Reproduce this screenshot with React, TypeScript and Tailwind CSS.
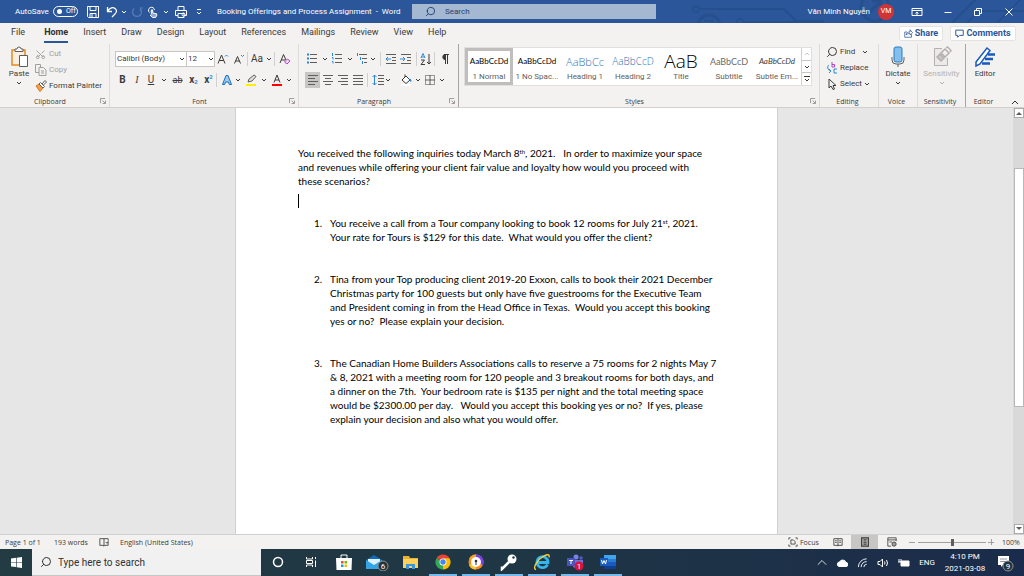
import { clsx } from "clsx";
import { Scissors, Search } from "lucide-react";
import type { ReactNode } from "react";

type Props = { className?: string; children?: ReactNode };

function Chevron({ className }: { className?: string }) {
  return (
    <svg viewBox="0 0 6 6" className={clsx("h-[6px] w-[6px] shrink-0", className)} fill="none" stroke="currentColor">
      <path d="M1 2l2 2 2-2" />
    </svg>
  );
}

function Tool({ label, className, children }: Props & { label: string }) {
  return (
    <button type="button" aria-label={label} className={clsx("flex h-[16px] shrink-0 items-center justify-center", className)}>
      {children}
    </button>
  );
}

function Drop({ label, className }: { label: string; className?: string }) {
  return (
    <Tool label={label} className={className}>
      <Chevron />
    </Tool>
  );
}

function Sep() {
  return <span className="h-[14px] w-px shrink-0 bg-[#d2d0ce]" />;
}

function Glyph({ children, className, box = "0 0 12 12" }: Props & { box?: string }) {
  return (
    <svg viewBox={box} className={clsx("shrink-0", className ?? "h-[12px] w-[12px]")} fill="none" stroke="currentColor">
      {children}
    </svg>
  );
}

function Group({
  name,
  className,
  launcher,
  dark,
  children,
}: Props & { name: string; launcher?: boolean; dark?: boolean }) {
  return (
    <section
      aria-label={name}
      className={clsx("flex flex-col border-r", dark ? "border-[#a8a6a4]" : "border-[#dddbd9]", className)}
    >
      <div className="flex-1">{children}</div>
      <div className="flex h-[12px] items-center pr-[3px] font-['Open_Sans'] text-[7px]">
        <span className="flex-1 text-center">{name}</span>
        {launcher && (
          <button type="button" aria-label={`${name} settings`}>
            <svg viewBox="0 0 7 7" className="h-[6px] w-[6px]" fill="none" stroke="#8a8886">
              <path d="M.5 6V.5H6M3 3l3 3M6.5 3v3.5H3" />
            </svg>
          </button>
        )}
      </div>
    </section>
  );
}

/* Title bar */

function Circuits() {
  return (
    <svg className="absolute right-0 top-0 h-[23px] w-[340px]" viewBox="0 0 340 23" fill="none" stroke="#264f8e" strokeWidth="2">
      <circle cx="12" cy="9" r="3" />
      <path d="M15 9h85l12 12h28" />
      <circle cx="25" cy="26" r="11" strokeWidth="3" />
      <path d="M20 21h10" />
      <circle cx="56" cy="22" r="3" />
      <path d="M59 22h80" />
      <circle cx="191" cy="7" r="14" strokeWidth="3" />
      <path d="M184 14l13-13M188 1h9v9" strokeWidth="3" />
      <path d="M268 23l24-24M283 23l12-12h45M313 23l24-24" />
    </svg>
  );
}

function TitleBar() {
  return (
    <header className="relative flex h-[23px] shrink-0 items-center bg-[#2b579a] text-[8px] text-white">
      <Circuits />
      <label className="flex w-[87px] items-center gap-[5px] pl-[15px]">
        <span className="w-[33px] whitespace-nowrap">AutoSave</span>
        <input type="checkbox" role="switch" className="peer sr-only" />
        <span className="flex h-[11px] w-[25px] items-center gap-[4px] rounded-full border border-white pl-[3px] text-[7px]">
          <span className="h-[5px] w-[5px] rounded-full bg-white" />
          Off
        </span>
      </label>
      <Tool label="Save" className="w-[12px]">
        <Glyph>
          <path d="M.5.5h11v11h-10l-1-1zM3 .5v4h6v-4M3 11.5v-4h6v4M5 8v3" />
        </Glyph>
      </Tool>
      <Tool label="Undo" className="ml-[6px] w-[13px]">
        <Glyph>
          <path d="M1.500 1v4.500H6M1.500 5C4 2 7 1 9 2.500c2.500 2 1.500 4-.5 6L6 11" strokeWidth="1.300" />
        </Glyph>
      </Tool>
      <Drop label="Undo list" className="w-[12px]" />
      <Tool label="Repeat" className="ml-[1px] w-[12px] text-[#5a7db3]">
        <Glyph>
          <path d="M3 2.500a4.500 4.500 0 1 0 6 0M9.500 5V2H12" strokeWidth="1.200" />
        </Glyph>
      </Tool>
      <Tool label="Touch mode" className="ml-[4px] w-[12px]">
        <Glyph>
          <path d="M2.500 6.500a3 3 0 1 1 5-2.500" />
          <path d="M4.300 8.500V4q.7-1 1.400 0v3l4 .8v2L8.500 11.500h-3L3 9" fill="#fff" fillOpacity=".5" />
        </Glyph>
      </Tool>
      <Drop label="Touch mode list" className="w-[13px]" />
      <Tool label="Quick print" className="ml-[3px] w-[12px]">
        <Glyph>
          <path d="M3 4.500v-4h6v4M3 9.500H.5v-5h11v5H9M3 7.500h6v4H3z" />
          <circle cx="8.500" cy="8.500" r="1.500" />
        </Glyph>
      </Tool>
      <Tool label="Customize toolbar" className="ml-[8px] w-[8px]">
        <svg viewBox="0 0 6 6" className="h-[6px] w-[6px]" stroke="#fff" fill="none">
          <path d="M1 .5h4M1 3l2 2 2-2" />
        </svg>
      </Tool>
      <h1 className="ml-[14px] w-[195px] whitespace-pre">Booking Offerings and Process Assignment  -  Word</h1>
      <label className="flex h-[15px] w-[244px] items-center gap-[9px] bg-[#a5b8d2] pl-[13px] text-[#1f4173]">
        <Search className="h-[11px] w-[11px] -scale-x-100" strokeWidth={2} />
        <input type="text" aria-label="Search" placeholder="Search" className="w-[120px] bg-transparent outline-none placeholder:text-[#1f4173]" />
      </label>
      <div className="relative ml-auto flex items-center">
        <span className="whitespace-nowrap">Văn Minh Nguyễn</span>
        <span className="ml-[8px] flex h-[16px] w-[16px] items-center justify-center rounded-full bg-[#d13438] text-[7px]">VM</span>
        <Tool label="Ribbon display" className="ml-[17px] w-[12px]">
          <Glyph>
            <path d="M1 2.500h10v7H1zM1 4.500h10M6 9V6M4.500 7.500L6 6l1.500 1.500" />
          </Glyph>
        </Tool>
        <Tool label="Minimize" className="ml-[19px] w-[12px]">
          <Glyph>
            <path d="M2.500 6.500h7" />
          </Glyph>
        </Tool>
        <Tool label="Restore" className="ml-[18px] w-[12px]">
          <Glyph>
            <path d="M2.500 4.500h5v5h-5zM4.500 4V2.500h5v5H8" />
          </Glyph>
        </Tool>
        <Tool label="Close" className="ml-[19px] mr-[9px] w-[12px]">
          <Glyph>
            <path d="M2.500 2.500l7 7M9.500 2.500l-7 7" />
          </Glyph>
        </Tool>
      </div>
    </header>
  );
}

/* Tabs */

const TABS = ["File", "Home", "Insert", "Draw", "Design", "Layout", "References", "Mailings", "Review", "View", "Help"];

function Tabs() {
  return (
    <nav className="flex h-[21px] shrink-0 items-center pl-[11px] pr-[8px] text-[9px]">
      <div className="flex gap-[15px]">
        {TABS.map((tab) => (
          <button
            key={tab}
            type="button"
            className={clsx(
              "h-[18px] border-b-2",
              tab === "Home" ? "border-[#2b579a] font-bold text-[#323130]" : "border-transparent",
              tab === "File" && "mr-[4px]",
            )}
          >
            {tab}
          </button>
        ))}
      </div>
      <div className="ml-auto flex gap-[7px] font-bold text-[#2b579a]">
        <button type="button" className="flex h-[15px] w-[44px] items-center justify-center gap-[2px] rounded-xs border border-[#e5e3e1] bg-white">
          <Glyph className="h-[9px] w-[9px]">
            <path d="M4 4H1v7h9V7M3 8c0-3 2-4 5-4V1l3.500 4L8 8V6C6 6 4 6 3 8z" />
          </Glyph>
          Share
        </button>
        <button type="button" className="flex h-[15px] w-[66px] items-center justify-center gap-[2px] rounded-xs border border-[#e5e3e1] bg-white">
          <Glyph className="h-[9px] w-[9px]">
            <path d="M1 1.500h10v7H6l-2.500 2.500V8.500H1z" strokeWidth="1.300" />
          </Glyph>
          Comments
        </button>
      </div>
    </nav>
  );
}

/* Ribbon */

function Clipboard() {
  return (
    <Group name="Clipboard" launcher className="w-[110px]">
      <div className="flex pt-[2px]">
        <button type="button" className="flex w-[35px] flex-col items-center pl-[3px]">
          <svg viewBox="0 0 20 22" className="h-[22px] w-[20px]" fill="none">
            <path d="M3 4h13v15H3z" fill="#f8efe2" stroke="#e58a1f" strokeWidth="1.500" />
            <path d="M6 5.500V3h2a2 2 0 0 1 4 0h2v2.500z" fill="#fff" stroke="#605e5c" />
            <path d="M10.500 9.500h8v11h-8z" fill="#fff" stroke="#605e5c" />
          </svg>
          <span className="h-[12px] leading-[12px]">Paste</span>
          <Chevron />
        </button>
        <div className="flex flex-col">
          <button type="button" disabled className="flex h-[16px] items-center gap-[3px] text-[#a19f9d]">
            <Scissors className="h-[11px] w-[11px] -rotate-90" strokeWidth={2} />
            Cut
          </button>
          <button type="button" disabled className="flex h-[16px] items-center gap-[2px] text-[#a19f9d]">
            <Glyph>
              <path d="M4 8.500H.5v-8h5V3M4 3.500h4.500L11 6v5.500H4zM6 7h3M6 9h3" />
            </Glyph>
            Copy
          </button>
          <button type="button" className="flex h-[16px] items-center gap-[2px] whitespace-nowrap">
            <Glyph>
              <path d="M1 6l3-2 4 4-3 3.500z" fill="#f0a04b" stroke="#d9771a" />
              <path d="M4 4l1.500-1.500 4 4L8 8zM7 4l3-3.500L11.500 2 8.500 5" fill="#fff" stroke="#605e5c" />
            </Glyph>
            Format Painter
          </button>
        </div>
      </div>
    </Group>
  );
}

function FontGroup() {
  return (
    <Group name="Font" launcher className="w-[189px]">
      <div className="mt-[5px] flex h-[20px] items-center pl-[5px]">
        <div className="relative">
          <select aria-label="Font" className="h-[16px] w-[72px] appearance-none border border-[#c8c6c4] bg-white pl-[1px] leading-[12px]">
            <option>Calibri (Body)</option>
          </select>
          <Chevron className="pointer-events-none absolute right-[2px] top-[5px]" />
        </div>
        <div className="relative -ml-px">
          <select aria-label="Font size" className="h-[16px] w-[29px] appearance-none border border-[#c8c6c4] bg-white pl-[1px] leading-[12px]">
            <option>12</option>
          </select>
          <Chevron className="pointer-events-none absolute right-[1px] top-[5px]" />
        </div>
        <Tool label="Grow font" className="w-[16px]">
          <Glyph>
            <path d="M1 10.500L4.500 2 8 10.500M2.300 7.500h4.400" />
            <path d="M8 3.500L9.500 2 11 3.500" stroke="#2b88d8" />
          </Glyph>
        </Tool>
        <Tool label="Shrink font" className="w-[16px]">
          <Glyph>
            <path d="M1.500 10.500l3-7 3 7M2.500 8h4" />
            <path d="M8 2l1.500 1.500L11 2" stroke="#2b88d8" />
          </Glyph>
        </Tool>
        <Sep />
        <Tool label="Change case" className="w-[16px] pl-[2px] text-[10px]">Aa</Tool>
        <Drop label="Case list" className="w-[10px]" />
        <Sep />
        <Tool label="Clear formatting" className="ml-[3px] w-[14px]">
          <Glyph>
            <path d="M1 10L4.500 1.500 7 7M2.300 7h4" />
            <path d="M5.500 9l3-3 2.500 2-3 3z" stroke="#b146c2" fill="#f0dcf3" />
          </Glyph>
        </Tool>
      </div>
      <div className="mt-px flex h-[20px] items-center pl-[5px] text-[10px]">
        <Tool label="Bold" className="w-[15px] font-bold">B</Tool>
        <Tool label="Italic" className="w-[14px] font-['Liberation_Serif'] italic">I</Tool>
        <Tool label="Underline" className="w-[14px] underline">U</Tool>
        <Drop label="Underline list" className="w-[11px]" />
        <Tool label="Strikethrough" className="w-[17px] text-[9px] line-through">ab</Tool>
        <Tool label="Subscript" className="w-[15px] font-bold">
          x<sub className="text-[6px] text-[#2b88d8]">2</sub>
        </Tool>
        <Tool label="Superscript" className="w-[15px] font-bold">
          x<sup className="text-[6px] text-[#2b88d8]">2</sup>
        </Tool>
        <Sep />
        <Tool label="Text effects" className="ml-px w-[17px]">
          <Glyph>
            <path d="M1.500 10.500L5 1.500h2l3.500 9H8.300l-.8-2.500h-3l-.8 2.500z" fill="#9ccbf0" stroke="#1b6fb8" />
          </Glyph>
        </Tool>
        <Drop label="Effects list" className="w-[6px]" />
        <Tool label="Highlight" className="w-[20px]">
          <Glyph>
            <path d="M3 8l1-3 5-4 2 1.500L7 7z" fill="#e1dfdd" stroke="#605e5c" />
            <path d="M1 11h10" stroke="#ffee00" strokeWidth="2" />
          </Glyph>
        </Tool>
        <Drop label="Highlight list" className="w-[6px]" />
        <Tool label="Font color" className="w-[19px]">
          <Glyph>
            <path d="M3 8.500l3-7.500 3 7.500M4 6h4" />
            <path d="M1 11h10" stroke="#f00" strokeWidth="2" />
          </Glyph>
        </Tool>
        <Drop label="Color list" className="w-[6px]" />
      </div>
    </Group>
  );
}

const ALIGN = [
  { name: "Align left", d: "M0 .5h10M0 3.500h7M0 6.500h10M0 9.500h7" },
  { name: "Center", d: "M0 .5h10M2 3.500h6M0 6.500h10M2 9.500h6" },
  { name: "Align right", d: "M0 .5h10M3 3.500h7M0 6.500h10M3 9.500h7" },
  { name: "Justify", d: "M0 .5h10M0 3.500h10M0 6.500h10M0 9.500h10" },
];

function Paragraph() {
  return (
    <Group name="Paragraph" launcher dark className="w-[160px]">
      <div className="mt-[5px] flex h-[20px] items-center pl-[6px]">
        <Tool label="Bullets" className="w-[14px]">
          <Glyph>
            <path d="M4 1.500h7M4 5.500h7M4 9.500h7" stroke="#605e5c" />
            <path d="M1 1.500h2M1 5.500h2M1 9.500h2" stroke="#2b88d8" strokeWidth="2" />
          </Glyph>
        </Tool>
        <Drop label="Bullets list" className="w-[11px]" />
        <Tool label="Numbering" className="w-[14px]">
          <Glyph>
            <path d="M4 1.500h7M4 5.500h7M4 9.500h7" stroke="#605e5c" />
            <path d="M1.500 0v3M1 4.500h1v2M1 8.500h1v2" stroke="#2b88d8" />
          </Glyph>
        </Tool>
        <Drop label="Numbering list" className="w-[11px]" />
        <Tool label="Multilevel list" className="w-[14px]">
          <Glyph>
            <path d="M3 1.500h8M6 5.500h5M8 9.500h3" stroke="#605e5c" />
            <path d="M1.500 0v3M4.500 4v3M6.500 8v3" stroke="#2b88d8" />
          </Glyph>
        </Tool>
        <Drop label="Multilevel options" className="w-[7px]" />
        <span className="w-[4px]" />
        <Sep />
        <Tool label="Decrease indent" className="ml-[2px] w-[15px]">
          <Glyph>
            <path d="M1 1.500h10M7 4.500h4M7 7.500h4M1 10.500h10" stroke="#605e5c" />
            <path d="M6 6H1M3 4L1 6l2 2" stroke="#2b88d8" />
          </Glyph>
        </Tool>
        <Tool label="Increase indent" className="w-[15px]">
          <Glyph>
            <path d="M1 1.500h10M7 4.500h4M7 7.500h4M1 10.500h10" stroke="#605e5c" />
            <path d="M0 6h5M3 4l2 2-2 2" stroke="#2b88d8" />
          </Glyph>
        </Tool>
        <span className="w-[3px]" />
        <Sep />
        <Tool label="Sort" className="w-[17px]">
          <Glyph>
            <path d="M1 5l2-4.500L5 5M1.500 4h3" stroke="#2b88d8" />
            <path d="M1 7h3.500L1 11.500h4M9 1v10M7 9l2 2 2-2" />
          </Glyph>
        </Tool>
        <Sep />
        <Tool label="Show marks" className="w-[20px]">
          <Glyph>
            <path d="M6.500 2v9M8.500 2v9M5 1.500h5" />
            <path d="M6 1.500a2 2.300 0 0 0 0 5z" fill="currentColor" />
          </Glyph>
        </Tool>
      </div>
      <div className="mt-px flex h-[20px] items-center pl-[6px]">
        {ALIGN.map((align, i) => (
          <Tool key={align.name} label={align.name} className={clsx("w-[15px]", i === 0 && "bg-[#c8c6c4]")}>
            <Glyph className="h-[10px] w-[10px]" box="0 0 10 10">
              <path d={align.d} stroke="#605e5c" />
            </Glyph>
          </Tool>
        ))}
        <span className="w-[2px]" />
        <Sep />
        <Tool label="Line spacing" className="ml-[2px] w-[15px]">
          <Glyph>
            <path d="M6 1.500h6M6 4.500h6M6 7.500h6M6 10.500h6" stroke="#605e5c" />
            <path d="M2.500 1v10M.5 3l2-2 2 2M.5 9l2 2 2-2" stroke="#2b88d8" />
          </Glyph>
        </Tool>
        <Drop label="Spacing list" className="w-[6px]" />
        <Tool label="Shading" className="ml-[8px] w-[14px]">
          <Glyph>
            <path d="M2 6l4-4 4 4-4 3.500zM5 3V.5" fill="#fff" />
            <path d="M10 5l1 2.500" stroke="#2b88d8" strokeWidth="1.500" />
            <path d="M1 11h10" stroke="#fff" strokeWidth="2" />
          </Glyph>
        </Tool>
        <Drop label="Shading list" className="w-[10px]" />
        <Tool label="Borders" className="w-[14px]">
          <Glyph>
            <path d="M1.500 1.500h9v9h-9z" strokeDasharray="1 1" />
            <path d="M6 1v10M1 6h10" stroke="#605e5c" />
          </Glyph>
        </Tool>
        <Drop label="Borders list" className="w-[10px]" />
      </div>
    </Group>
  );
}

const STYLES = [
  { name: "1 Normal", sample: "AaBbCcDd", look: "text-[8px] font-['Lato'] text-black" },
  { name: "1 No Spac...", sample: "AaBbCcDd", look: "text-[8px] font-['Lato'] text-black" },
  { name: "Heading 1", sample: "AaBbCc", look: "text-[11px] font-['Open_Sans'] font-light text-[#2e74b5]" },
  { name: "Heading 2", sample: "AaBbCcD", look: "text-[10px] font-['Open_Sans'] font-light text-[#2e74b5]" },
  { name: "Title", sample: "AaB", look: "text-[19px] font-['Open_Sans'] font-light text-black" },
  { name: "Subtitle", sample: "AaBbCcD", look: "text-[9px] font-['Lato'] text-[#6b6b6b]" },
  { name: "Subtle Em...", sample: "AaBbCcDd", look: "text-[8px] font-['Lato'] italic text-[#404040]" },
];

function Styles() {
  return (
    <Group name="Styles" launcher className="min-w-[360px] flex-1">
      <div className="ml-[5px] mr-[7px] mt-[3px] flex h-[39px] border border-[#e1dfdd] bg-white">
        <div className="flex flex-1">
          {STYLES.map((style, i) => (
            <button
              key={style.name}
              type="button"
              className={clsx(
                "flex w-[48px] flex-col items-center border-[3px] whitespace-nowrap",
                i === 0 ? "border-[#c0bebc]" : "border-transparent",
              )}
            >
              <span className={clsx("flex h-[20px] items-center leading-none", style.look)}>{style.sample}</span>
              <span className="h-[11px] text-[8px] leading-[11px] text-[#605e5c]">{style.name}</span>
            </button>
          ))}
        </div>
        <div className="flex w-[10px] flex-col border-l border-[#d2d0ce]">
          <button type="button" aria-label="Previous styles" className="flex flex-1 items-center justify-center text-[#c8c6c4]">
            <Chevron className="rotate-180" />
          </button>
          <button type="button" aria-label="Next styles" className="flex flex-1 items-center justify-center border-y border-[#c8c6c4]">
            <Chevron />
          </button>
          <button type="button" aria-label="All styles" className="flex flex-1 items-center justify-center">
            <svg viewBox="0 0 6 6" className="h-[6px] w-[6px]" stroke="currentColor" fill="none">
              <path d="M0 .5h6M1 3l2 2 2-2" />
            </svg>
          </button>
        </div>
      </div>
    </Group>
  );
}

function Editing() {
  return (
    <Group name="Editing" className="w-[59px]">
      <div className="flex flex-col pl-[6px]">
        <button type="button" className="flex h-[16px] items-center gap-[2px]">
          <Search className="h-[12px] w-[12px] -scale-x-100" strokeWidth={2} />
          Find
          <Chevron className="ml-[5px]" />
        </button>
        <button type="button" className="flex h-[16px] items-center gap-[2px]">
          <Glyph>
            <path d="M6 0v5h2.500V2.500H6" stroke="#b146c2" />
            <path d="M11 7H8v4h3" stroke="#2b88d8" />
            <path d="M3 3C1 4 1 8 5 9M3 7l2 2-2 2" stroke="#2b88d8" />
          </Glyph>
          Replace
        </button>
        <button type="button" className="flex h-[16px] items-center gap-[2px]">
          <Glyph>
            <path d="M3 1v9l2-2 2 3.500L8.500 11 7 7.500h3z" />
          </Glyph>
          Select
          <Chevron />
        </button>
      </div>
    </Group>
  );
}

function BigButton({ label, icon, off, chevron }: { label: string; icon: ReactNode; off?: boolean; chevron?: boolean }) {
  return (
    <button
      type="button"
      disabled={off}
      className={clsx("flex w-full flex-col items-center pt-[2px]", off && "text-[#b3b0ad]")}
    >
      {icon}
      <span className="h-[12px] leading-[12px]">{label}</span>
      {chevron && <Chevron />}
    </button>
  );
}

function Ribbon() {
  return (
    <div className="flex h-[64px] shrink-0 border-b border-[#d2d0ce] text-[8px]">
      <Clipboard />
      <FontGroup />
      <Paragraph />
      <Styles />
      <Editing />
      <Group name="Voice" className="w-[39px]">
        <BigButton
          label="Dictate"
          chevron
          icon={
            <svg viewBox="0 0 16 22" className="h-[22px] w-[16px]" fill="none" stroke="#605e5c">
              <path d="M2 11v3q0 4 4 4h4q4 0 4-4v-3M8 18v3" />
              <rect x="4" y="1" width="8" height="15" rx="2" fill="#83beec" stroke="#2b7cc0" />
            </svg>
          }
        />
      </Group>
      <Group name="Sensitivity" dark className="w-[48px]">
        <BigButton
          label="Sensitivity"
          off
          chevron
          icon={
            <svg viewBox="0 0 20 22" className="h-[22px] w-[20px]" fill="none" stroke="#b3b0ad">
              <path d="M10 2.500H2.500v17h13V12" fill="#eceae8" />
              <path d="M5 11l3-3 4 4-3 3z" fill="#c8c6c4" strokeWidth="1.500" />
              <path d="M9 7l4-4 4 4-4 4zM14 2l1.500-1L19 4.500 18 6" strokeWidth="1.500" />
            </svg>
          }
        />
      </Group>
      <Group name="Editor" className="w-[39px] border-transparent">
        <BigButton
          label="Editor"
          icon={
            <svg viewBox="0 0 22 22" className="h-[22px] w-[22px]" fill="none" stroke="#185abd">
              <path d="M2 16L13 2l3 2.500L6 18l-4 2z" fill="#fff" strokeWidth="1.500" />
              <path d="M14 8.500h7M11 13h8M8 17.500h8" strokeWidth="2.500" />
            </svg>
          }
        />
      </Group>
      <button type="button" aria-label="Collapse ribbon" className="ml-[6px] mr-[5px] self-end pb-[2px]">
        <svg viewBox="0 0 8 6" className="h-[6px] w-[8px]" fill="none" stroke="#323130">
          <path d="M1 5l3-3 3 3" />
        </svg>
      </button>
    </div>
  );
}

/* Document */

const QUESTIONS: ReactNode[] = [
  <>
    You receive a call from a Tour company looking to book 12 rooms for July 21<sup className="text-[6px]">st</sup>, 2021.
    <br />
    {"Your rate for Tours is $129 for this date.  What would you offer the client?"}
  </>,
  "Tina from your Top producing client 2019-20 Exxon, calls to book their 2021 December\nChristmas party for 100 guests but only have five guestrooms for the Executive Team\nand President coming in from the Head Office in Texas.  Would you accept this booking\nyes or no?  Please explain your decision.",
  "The Canadian Home Builders Associations calls to reserve a 75 rooms for 2 nights May 7\n& 8, 2021 with a meeting room for 120 people and 3 breakout rooms for both days, and\na dinner on the 7th.  Your bedroom rate is $135 per night and the total meeting space\nwould be $2300.00 per day.   Would you accept this booking yes or no?  If yes, please\nexplain your decision and also what you would offer.",
];

function Document() {
  return (
    <main className="flex min-h-0 flex-1 bg-[#e6e6e6]">
      <div className="flex min-w-0 flex-1 justify-center overflow-hidden">
        <article className="w-[543px] border-x border-[#d2d0ce] bg-white px-[62px] pt-[38px] font-['Lato',sans-serif] text-[10px] leading-[14px] text-black">
          <p className="whitespace-pre">
            {"You received the following inquiries today March 8"}
            <sup className="text-[6px]">th</sup>
            {", 2021.   In order to maximize your space\nand revenues while offering your client fair value and loyalty how would you proceed with\nthese scenarios?"}
          </p>
          <div className="my-[6px] h-[14px] w-px bg-black" />
          <ol className="flex flex-col gap-[28px] pl-[16px] pt-[2px]">
            {QUESTIONS.map((question, i) => (
              <li key={i} className="flex">
                <span className="w-[16px] shrink-0">{i + 1}.</span>
                <div className="whitespace-pre">{question}</div>
              </li>
            ))}
          </ol>
        </article>
      </div>
      <div className="flex w-[11px] flex-col items-center bg-[#d9d9d9]">
        <button type="button" aria-label="Scroll up" className="flex h-[10px] w-[10px] items-center justify-center border border-[#ababab] bg-white text-[#605e5c]">
          <svg viewBox="0 0 6 4" className="h-[4px] w-[6px]" fill="currentColor">
            <path d="M0 4l3-3 3 3z" />
          </svg>
        </button>
        <div className="mt-[50px] h-[239px] w-[10px] border border-[#b8b8b8] bg-white" />
        <button type="button" aria-label="Scroll down" className="mt-auto flex h-[10px] w-[10px] items-center justify-center border border-[#ababab] bg-white text-[#605e5c]">
          <svg viewBox="0 0 6 4" className="h-[4px] w-[6px]" fill="currentColor">
            <path d="M0 0l3 3 3-3z" />
          </svg>
        </button>
      </div>
    </main>
  );
}

/* Status bar */

function StatusBar() {
  return (
    <footer className="flex h-[15px] shrink-0 items-center border-t border-[#d2d0ce] px-[5px] font-['Open_Sans'] text-[7px]">
      <span className="w-[49px]">Page 1 of 1</span>
      <span className="w-[45px]">193 words</span>
      <Tool label="Proofing" className="w-[10px]">
        <Glyph className="h-[10px] w-[10px]">
          <path d="M6 2v9M6 2H1v8h4l1 1 1-1h4V6M6 2h5v2M8 6l1.500 1.500L12 4" />
        </Glyph>
      </Tool>
      <span className="ml-[11px]">English (United States)</span>
      <button type="button" className="ml-auto flex items-center gap-[2px]">
        <Glyph className="h-[10px] w-[10px]">
          <path d="M3 1H1v2M9 1h2v2M3 11H1V9M9 11h2V9M3.500 3.500h3l2 2v3h-5z" />
        </Glyph>
        <span className="w-[18px]">Focus</span>
      </button>
      <Tool label="Read mode" className="ml-[6px] w-[27px]">
        <Glyph className="h-[10px] w-[10px]">
          <path d="M6 2v9M6 2H1v8h10V2zM2.500 4.500h2M2.500 6.500h2M7.500 4.500h2M7.500 6.500h2" />
        </Glyph>
      </Tool>
      <button type="button" aria-label="Print layout" className="flex h-[14px] w-[27px] items-center justify-center bg-[#c8c6c4]">
        <Glyph className="h-[10px] w-[10px]">
          <path d="M2 1h8v10H2zM4 3.500h4M4 6h4M4 8.500h4" strokeWidth="1.500" />
        </Glyph>
      </button>
      <Tool label="Web layout" className="w-[27px]">
        <Glyph className="h-[10px] w-[10px]">
          <path d="M11 5V1H1v10h4M1 3.500h10M3 6h3" />
          <circle cx="8.500" cy="8.500" r="2.500" fill="#a19f9d" />
        </Glyph>
      </Tool>
      <button type="button" aria-label="Zoom out" className="flex w-[13px] justify-end pr-[3px]">
        <svg viewBox="0 0 6 6" className="h-[6px] w-[6px]" stroke="#a19f9d">
          <path d="M0 3.500h6" />
        </svg>
      </button>
      <input
        type="range"
        aria-label="Zoom"
        defaultValue={50}
        className="h-[9px] w-[68px] appearance-none bg-transparent [&::-webkit-slider-runnable-track]:h-px [&::-webkit-slider-runnable-track]:bg-[#a19f9d] [&::-webkit-slider-thumb]:-mt-[3px] [&::-webkit-slider-thumb]:h-[7px] [&::-webkit-slider-thumb]:w-[3px] [&::-webkit-slider-thumb]:appearance-none [&::-webkit-slider-thumb]:bg-[#605e5c]"
      />
      <button type="button" aria-label="Zoom in" className="ml-[2px] w-[14px]">
        <svg viewBox="0 0 6 6" className="h-[6px] w-[6px]" stroke="#a19f9d">
          <path d="M0 3.500h6M3.500 0v6" />
        </svg>
      </button>
      <span className="w-[17px] whitespace-nowrap">100%</span>
    </footer>
  );
}

/* Taskbar */

function AppIcon({ children }: Props) {
  return (
    <svg viewBox="0 0 18 18" className="h-[18px] w-[18px]" fill="none">
      {children}
    </svg>
  );
}

const APPS: { name: string; open?: boolean; icon: ReactNode }[] = [
  { name: "Cortana", icon: <AppIcon><circle cx="9" cy="9" r="4.500" stroke="#fff" strokeWidth="1.500" /></AppIcon> },
  {
    name: "Task view",
    icon: (
      <AppIcon>
        <path d="M4.500 4v2h6V4M4.500 14v-2h6v2M4.500 7.500h6v3h-6zM13.500 4v2M13.500 7.500v6.500" stroke="#fff" />
      </AppIcon>
    ),
  },
  {
    name: "Store",
    icon: (
      <AppIcon>
        <path d="M6 5V2h6v3" stroke="#fff" />
        <path d="M1 5h16l-.5 12h-15z" fill="#fff" />
        <path d="M6 8h2.500v2.500H6z" fill="#f25022" />
        <path d="M9.500 8H12v2.500H9.500z" fill="#7fba00" />
        <path d="M6 11.500h2.500V14H6z" fill="#00a4ef" />
        <path d="M9.500 11.500H12V14H9.500z" fill="#ffb900" />
      </AppIcon>
    ),
  },
  {
    name: "Mail",
    icon: (
      <svg viewBox="0 0 24 18" className="h-[18px] w-[24px]" fill="none">
        <path d="M1 7l8-5 8 5v9H1z" fill="#0f6cbd" />
        <path d="M3 6h12v6H3z" fill="#dff1fc" />
        <path d="M1 7l8 5 8-5v9H1z" fill="#32a5e7" />
        <circle cx="18" cy="13" r="5" fill="#26323a" stroke="#8a9499" />
        <text x="18" y="16" textAnchor="middle" fontSize="8" fill="#fff">6</text>
      </svg>
    ),
  },
  {
    name: "File Explorer",
    icon: (
      <AppIcon>
        <path d="M2 3h6l1 2h8v10H2z" fill="#e8b233" />
        <path d="M2 6h15v9H2z" fill="#fbd35c" />
        <path d="M5 16v-5h9v5h-3v-3H8v3z" fill="#3a96dd" />
      </AppIcon>
    ),
  },
  {
    name: "Chrome",
    open: true,
    icon: (
      <AppIcon>
        <path d="M9 9L2.500 5.200a7.500 7.500 0 0 1 13 0z" fill="#ea4335" />
        <path d="M9 9L2.500 5.200a7.500 7.500 0 0 0 6.500 11.300z" fill="#34a853" />
        <path d="M9 9v7.500a7.500 7.500 0 0 0 6.500-11.300H9z" fill="#fbbc04" />
        <circle cx="9" cy="9" r="3.500" fill="#fff" />
        <circle cx="9" cy="9" r="2.700" fill="#4285f4" />
      </AppIcon>
    ),
  },
  {
    name: "Secure browser",
    open: true,
    icon: (
      <AppIcon>
        <circle cx="9" cy="9" r="7.500" fill="#f58a1f" />
        <path d="M9 1.500A7.500 7.500 0 0 1 16 12L9 9z" fill="#7b3fe4" />
        <path d="M2 6a7.500 7.500 0 0 1 7-4.500V9z" fill="#f7a52a" />
        <path d="M2 12a7.500 7.500 0 0 0 7 4.500V9z" fill="#fdc52d" />
        <circle cx="9" cy="9" r="5" fill="#fff" />
        <circle cx="9" cy="8" r="1.300" fill="#333" />
        <path d="M9 8v4" stroke="#333" />
      </AppIcon>
    ),
  },
  {
    name: "Password manager",
    open: true,
    icon: (
      <AppIcon>
        <path d="M9 9l-7 7v-2.500" stroke="#fff" strokeWidth="2.500" />
        <circle cx="12" cy="6" r="4.500" fill="#fff" />
        <circle cx="13.500" cy="4.500" r="1.200" fill="#1f3644" />
      </AppIcon>
    ),
  },
  {
    name: "Internet Explorer",
    open: true,
    icon: (
      <AppIcon>
        <path d="M14.500 11.500A5.500 5.500 0 1 1 15 9.500H5" stroke="#35b5ea" strokeWidth="2.800" />
        <path d="M3 16.500C-1 16 4 7 10 3.500c4-2.500 7-2.500 6 1" stroke="#fbd33b" strokeWidth="1.300" />
      </AppIcon>
    ),
  },
  {
    name: "Teams",
    open: true,
    icon: (
      <AppIcon>
        <circle cx="10" cy="4" r="2.500" fill="#7b83eb" />
        <circle cx="15" cy="5" r="1.800" fill="#5059c9" />
        <path d="M7 7h10v5l-5 4-5-2z" fill="#6b72d8" />
        <path d="M1 5h8v8H1z" fill="#4b53bc" />
        <path d="M3 7.500h4M5 7.500V11" stroke="#fff" />
        <circle cx="13" cy="13" r="4.500" fill="#d8143c" />
        <text x="13" y="16" textAnchor="middle" fontSize="8" fill="#fff">1</text>
      </AppIcon>
    ),
  },
  {
    name: "Word",
    open: true,
    icon: (
      <AppIcon>
        <path d="M5 2h12v4H5z" fill="#41a5ee" />
        <path d="M5 6h12v3H5z" fill="#2b7cd3" />
        <path d="M5 9h12v4H5z" fill="#185abd" />
        <path d="M5 13h12v3H5z" fill="#103f91" />
        <path d="M1 5h8v8H1z" fill="#185abd" />
        <path d="M2.500 7l1 4L5 7.500 6.500 11l1-4" stroke="#fff" />
      </AppIcon>
    ),
  },
];

function Taskbar() {
  return (
    <div className="flex h-[27px] shrink-0 items-center bg-linear-to-r from-[#233b43] via-[#1f3644] to-[#1b2b4b] text-white">
      <button type="button" aria-label="Start" className="flex h-full w-[32px] items-center justify-center">
        <svg viewBox="0 0 12 12" className="h-[11px] w-[11px]" fill="#fff">
          <path d="M0 1.700l5.500-.8v4.700H0zM6.200.8L12 0v5.600H6.200zM0 6.300h5.500V11L0 10.300zM6.200 6.300H12V12l-5.800-.9z" />
        </svg>
      </button>
      <label className="flex h-full w-[229px] items-center gap-[6px] border-b border-[#c8c6c4] bg-[#f1f1f1] pl-[8px] text-[#323130]">
        <Search className="h-[12px] w-[12px] -scale-x-100" strokeWidth={2} />
        <input type="text" aria-label="Search Windows" placeholder="Type here to search" className="w-[170px] bg-transparent text-[10px] outline-none placeholder:text-[#323130]" />
      </label>
      {APPS.map((app) => (
        <button
          key={app.name}
          type="button"
          aria-label={app.name}
          className="flex h-full w-[33px] flex-col items-center justify-end"
        >
          {app.icon}
          <span className={clsx("mt-[3px] h-[2px] w-[28px]", app.open && "bg-[#76b9ed]")} />
        </button>
      ))}
      <div className="ml-auto flex items-center gap-[9px]">
        <Glyph className="h-[10px] w-[10px]">
          <path d="M1 8l5-5 5 5" />
        </Glyph>
        <Glyph>
          <path d="M3 9.500h7a2 2 0 0 0 0-4 3.500 3.500 0 0 0-6.500-.5A2.300 2.300 0 0 0 3 9.500z" fill="#fff" />
        </Glyph>
        <Glyph className="h-[11px] w-[11px]">
          <path d="M1.500 11A9 9 0 0 1 10.500 2M4.500 11a6 6 0 0 1 6-6M7.500 11a3 3 0 0 1 3-3" />
        </Glyph>
        <Glyph>
          <path d="M1 4.500h2L5.500 2v8L3 7.500H1zM7.500 4.500q1 1.500 0 3M9.500 3q2 3 0 6" />
        </Glyph>
        <Glyph>
          <path d="M3 4h8v5H3z" fill="#fff" />
          <path d="M1 2v3M3 2v3M0 5h4" />
        </Glyph>
        <span className="text-[8px]">ENG</span>
        <div className="w-[42px] text-center text-[8px] leading-[12px]">
          <div>4:10 PM</div>
          <div>2021-03-08</div>
        </div>
        <button type="button" aria-label="Notifications" className="ml-[2px] mr-[10px]">
          <svg viewBox="0 0 17 18" className="h-[18px] w-[17px]">
            <path d="M1 2h11v9H6l-2 2v-2H1z" fill="#fff" />
            <path d="M3 5h7M3 7.500h7" stroke="#8a94a6" />
            <circle cx="11" cy="12" r="5" fill="#26323a" stroke="#8a9499" />
            <text x="11" y="15" textAnchor="middle" fontSize="8" fill="#fff">9</text>
          </svg>
        </button>
      </div>
    </div>
  );
}

export default function App() {
  return (
    <div className="flex h-screen flex-col overflow-hidden bg-[#f3f2f1] font-['Roboto','Noto_Sans',sans-serif] leading-none text-[#3b3a39]">
      <TitleBar />
      <Tabs />
      <Ribbon />
      <Document />
      <StatusBar />
      <Taskbar />
    </div>
  );
}
